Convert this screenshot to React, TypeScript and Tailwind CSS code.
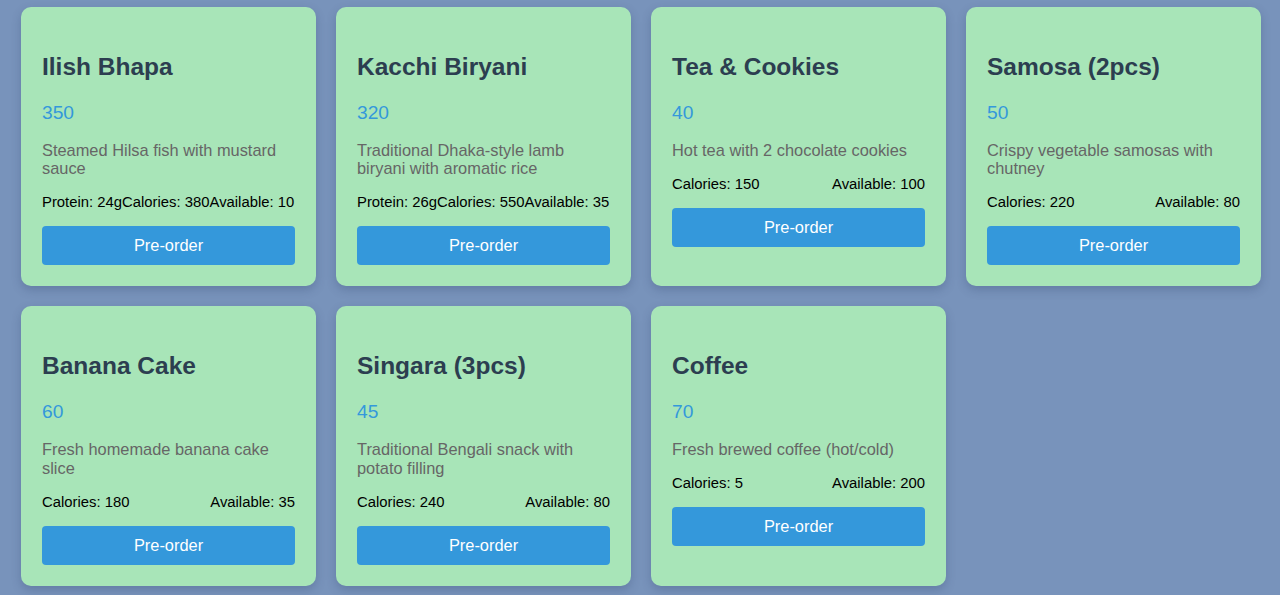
import React from "react";

interface MenuItem {
  name: string;
  price: number;
  description: string;
  nutrition: string[];
}

const ITEMS: MenuItem[] = [
  {
    name: "Ilish Bhapa",
    price: 350,
    description: "Steamed Hilsa fish with mustard sauce",
    nutrition: ["Protein: 24g", "Calories: 380", "Available: 10"],
  },
  {
    name: "Kacchi Biryani",
    price: 320,
    description: "Traditional Dhaka-style lamb biryani with aromatic rice",
    nutrition: ["Protein: 26g", "Calories: 550", "Available: 35"],
  },
  {
    name: "Tea & Cookies",
    price: 40,
    description: "Hot tea with 2 chocolate cookies",
    nutrition: ["Calories: 150", "Available: 100"],
  },
  {
    name: "Samosa (2pcs)",
    price: 50,
    description: "Crispy vegetable samosas with chutney",
    nutrition: ["Calories: 220", "Available: 80"],
  },
  {
    name: "Banana Cake",
    price: 60,
    description: "Fresh homemade banana cake slice",
    nutrition: ["Calories: 180", "Available: 35"],
  },
  {
    name: "Singara (3pcs)",
    price: 45,
    description: "Traditional Bengali snack with potato filling",
    nutrition: ["Calories: 240", "Available: 80"],
  },
  {
    name: "Coffee",
    price: 70,
    description: "Fresh brewed coffee (hot/cold)",
    nutrition: ["Calories: 5", "Available: 200"],
  },
];

function MenuCard({ item }: { item: MenuItem }) {
  // nutrition spans sit flush when there are three, spread apart when two
  const tight = item.nutrition.length > 2;

  return (
    <div className="bg-[#a8e5b8] rounded-[10px] shadow-[0_4px_10px_rgba(40,60,100,0.25)] p-[21px] flex flex-col">
      <h3 className="mt-[26px] text-[24.5px] font-bold leading-[26.8px] text-[#2c3e50]">
        {item.name}
      </h3>
      <p className="mt-[21px] text-[19.2px] leading-[21.4px] text-[#3498db]">
        {item.price}
      </p>
      <p className="mt-[17.3px] text-[16.4px] leading-[18.7px] text-[#666666]">
        {item.description}
      </p>
      <div
        className={
          tight
            ? "mt-[16.3px] flex text-[14.85px] leading-[16.1px] text-black"
            : "mt-[16.3px] flex justify-between text-[14.85px] leading-[16.1px] text-black"
        }
      >
        {item.nutrition.map((n) => (
          <span key={n}>{n}</span>
        ))}
      </div>
      <button className="mt-[16px] h-[39px] w-full rounded-[4px] bg-[#3498db] text-[16.4px] text-white">
        Pre-order
      </button>
    </div>
  );
}

export default function App() {
  return (
    <div className="min-h-[595px] bg-[#7893bb] font-['Liberation_Sans',Arial,sans-serif]">
      <div className="grid grid-cols-[repeat(4,295px)] items-stretch gap-5 pl-[21px] pt-[7px] pb-5">
        {ITEMS.map((item) => (
          <MenuCard key={item.name} item={item} />
        ))}
      </div>
    </div>
  );
}
